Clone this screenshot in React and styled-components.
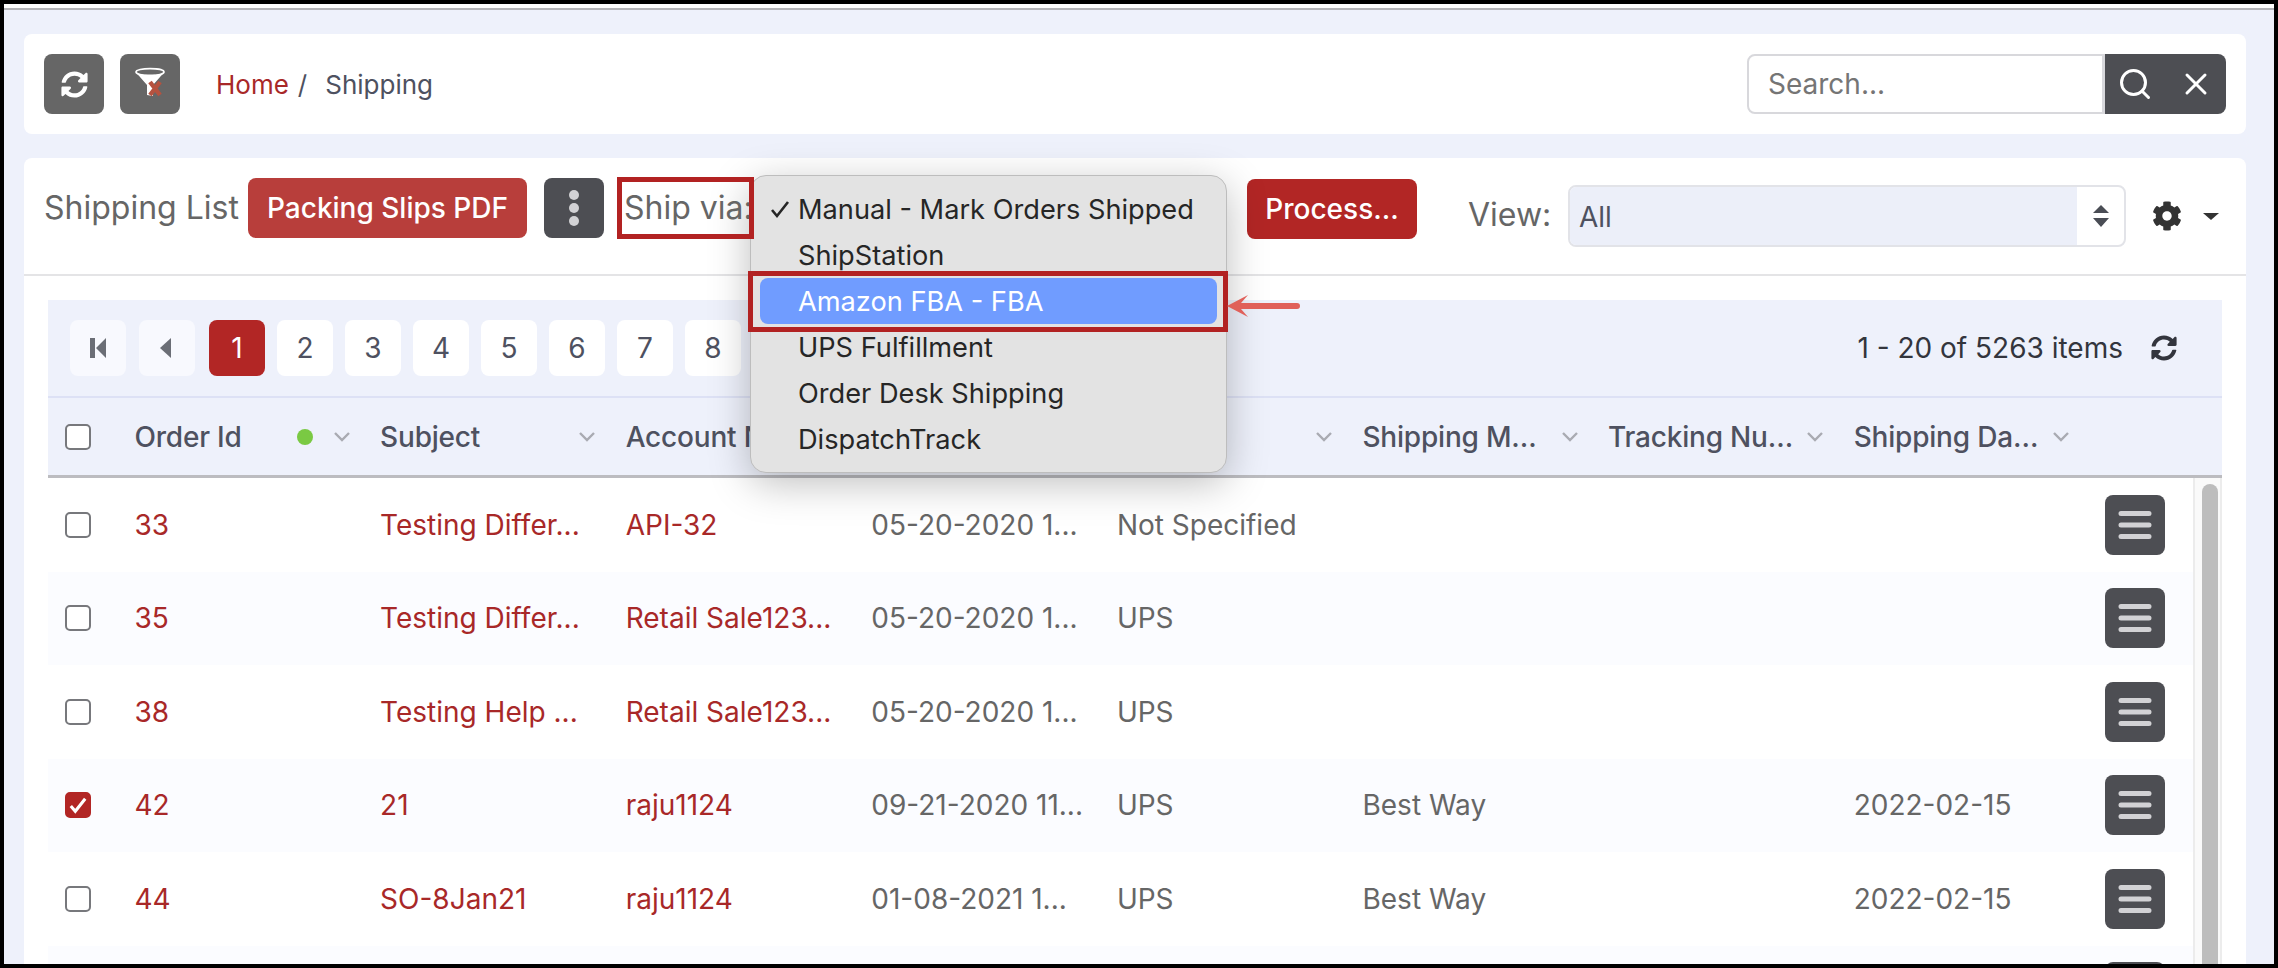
import React from 'react'
import styled, { createGlobalStyle } from 'styled-components'
import { FaSyncAlt, FaCog } from 'react-icons/fa'
import { Search, X } from 'lucide-react'

const GlobalStyle = createGlobalStyle`
  html, body { margin: 0; padding: 0; background: #000; }
  * { box-sizing: border-box; }
  body { font-family: Inter, "Liberation Sans", sans-serif; }
`

const Frame = styled.div`
  position: relative;
  width: 2278px;
  height: 968px;
  border: 4px solid #000;
  background: #eef1fb;
  overflow: hidden;
`
const TopRule = styled.div`
  height: 6px;
  background: #fff;
  border-bottom: 2px solid #b4b4b8;
`
const Page = styled.div`
  padding: 24px 28px 0 20px;
  display: flex;
  flex-direction: column;
  gap: 24px;
`
const Card = styled.section`
  background: #fff;
  border-radius: 8px;
`
const TopBar = styled(Card)`
  height: 100px;
  padding: 20px;
  display: flex;
  align-items: flex-start;
`
const IconButton = styled.button`
  width: 60px;
  height: 60px;
  border: none;
  border-radius: 8px;
  padding: 0;
  flex: none;
  display: flex;
  align-items: center;
  justify-content: center;
  background: ${p => p.$bg || '#666'};
  color: ${p => p.$color || '#fff'};
  margin-left: ${p => p.$ml || 0}px;
`
const Crumbs = styled.nav`
  margin-left: 36px;
  height: 60px;
  display: flex;
  align-items: center;
  font-size: 26px;
  color: #4e5160;
`
const CrumbLink = styled.span`
  color: #a82828;
`
const CrumbSep = styled.span`
  margin: 0 18px 0 9px;
`
const SearchGroup = styled.div`
  margin-left: auto;
  display: flex;
  height: 60px;
`
const SearchInput = styled.input`
  width: 358px;
  height: 60px;
  border: 2px solid #d8d8dc;
  border-right-width: 3px;
  border-radius: 8px 0 0 8px;
  padding: 0 19px;
  font: 400 28px Inter, sans-serif;
  outline: none;
  &::placeholder { color: #757575; opacity: 1; }
`
const SearchActions = styled.div`
  width: 121px;
  background: #4d4e53;
  border-radius: 0 8px 8px 0;
  color: #fff;
  display: flex;
  align-items: center;
  padding-left: 12px;
  gap: 25px;
`
const ListCard = styled(Card)`
  border-radius: 8px 8px 0 0;
`
const Toolbar = styled.div`
  height: 118px;
  padding: 20px 0 0 20px;
  display: flex;
  align-items: flex-start;
  border-bottom: 2px solid #e4e4e6;
`
const ListTitle = styled.h2`
  margin: 0;
  height: 60px;
  line-height: 60px;
  font-size: 32px;
  font-weight: 400;
  color: #666;
  width: 204px;
  flex: none;
  white-space: nowrap;
`
const Button = styled.button`
  height: 60px;
  border: none;
  border-radius: 8px;
  background: ${p => p.$bg};
  color: #fff;
  font: 500 28px Inter, sans-serif;
  padding: 0;
  flex: none;
  width: ${p => p.$w}px;
  margin-left: ${p => p.$ml || 0}px;
  margin-top: ${p => p.$mt || 0}px;
`
const ShipVia = styled.div`
  position: relative;
  z-index: 3;
  margin: -1px 0 0 13px;
  width: 137px;
  height: 62px;
  flex: none;
  border: 5px solid #b22222;
  font-size: 32px;
  line-height: 52px;
  color: #666;
  padding-left: 2px;
  white-space: nowrap;
  overflow: hidden;
`
const ViewLabel = styled.span`
  margin: 7px 0 0 51px;
  width: 100px;
  flex: none;
  height: 60px;
  line-height: 60px;
  font-size: 32px;
  color: #666;
`
const ViewSelect = styled.div`
  margin-top: 7px;
  width: 558px;
  height: 62px;
  flex: none;
  border: 2px solid #e2e3e8;
  border-radius: 8px;
  display: flex;
  overflow: hidden;
`
const ViewValue = styled.div`
  flex: 1;
  background: #eceff9;
  font-size: 28px;
  line-height: 60px;
  padding-left: 9px;
  color: #4e5160;
`
const ViewSpin = styled.div`
  width: 47px;
  display: flex;
  align-items: center;
  justify-content: center;
`
const GearMenu = styled.div`
  margin: 7px 0 0 26px;
  height: 62px;
  display: flex;
  align-items: center;
  color: #333;
  gap: 21px;
`
const Caret = styled.span`
  width: 0;
  height: 0;
  border-left: 8px solid transparent;
  border-right: 8px solid transparent;
  border-top: 7px solid #333;
`
const ListBody = styled.div`
  padding: 24px 24px 0;
`
const PagerBar = styled.div`
  height: 98px;
  background: #eef1fb;
  border-bottom: 2px solid #dde1f5;
  padding: 20px 45px 0 22px;
  display: flex;
  justify-content: space-between;
  align-items: flex-start;
`
const Pages = styled.div`
  display: flex;
  gap: 12px;
`
const PageButton = styled.button`
  width: 56px;
  height: 56px;
  border: none;
  padding: 0;
  border-radius: 8px;
  display: flex;
  align-items: center;
  justify-content: center;
  font: 400 28px Inter, sans-serif;
  background: ${p => (p.$active ? '#b22625' : p.$muted ? '#f8f9fe' : '#fff')};
  color: ${p => (p.$active ? '#fff' : '#4e5160')};
  margin-right: ${p => p.$mr || 0}px;
`
const PagerInfo = styled.div`
  height: 56px;
  display: flex;
  align-items: center;
  font-size: 28px;
  color: #33353d;
  gap: 28px;
`
const gridColumns = '86.5px repeat(8, 245.6px) 1fr'
const HeaderRow = styled.div`
  display: grid;
  grid-template-columns: ${gridColumns};
  align-items: center;
  height: 80px;
  background: #eef1fb;
  border-bottom: 3px solid #bcbcc0;
`
const HeaderCell = styled.div`
  display: flex;
  align-items: center;
  padding-right: 29.5px;
  font-size: 28px;
  font-weight: 500;
  letter-spacing: -0.2px;
  color: #4e5160;
  white-space: nowrap;
`
const Chevron = styled.svg`
  margin-left: ${p => (p.$fixed ? '0' : 'auto')};
  flex: none;
`
const Dot = styled.span`
  width: 16px;
  height: 16px;
  border-radius: 50%;
  background: #7ac943;
  margin-left: auto;
  margin-right: 20px;
  flex: none;
`
const CheckCell = styled.div`
  padding-left: 17px;
  display: flex;
  align-items: center;
`
const CheckBox = styled.span`
  width: 26px;
  height: 26px;
  border-radius: 5px;
  border: 2px solid ${p => (p.$checked ? '#b22625' : '#77787c')};
  background: ${p => (p.$checked ? '#b22625' : '#fff')};
  display: flex;
  align-items: center;
  justify-content: center;
`
const TableScroll = styled.div`
  display: flex;
`
const Rows = styled.div`
  flex: 1;
`
const Row = styled.div`
  display: grid;
  grid-template-columns: ${gridColumns};
  align-items: center;
  height: 93.5px;
  background: ${p => (p.$alt ? '#fbfcff' : '#fff')};
`
const Cell = styled.div`
  font-size: 28px;
  white-space: nowrap;
  color: ${p => (p.$link ? '#a82828' : '#666')};
`
const ActionCell = styled.div`
  padding-left: 5.5px;
`
const Scrollbar = styled.div`
  width: 29px;
  flex: none;
  padding: 6px 5px 0 7px;
  border-left: 2px solid #ececec;
  border-right: 2px solid #ececec;
  background: #fafafa;
`
const Thumb = styled.div`
  width: 16px;
  height: 900px;
  border-radius: 8px;
  background: #bdbdbd;
`
const Dropdown = styled.div`
  position: absolute;
  z-index: 2;
  left: 746px;
  top: 171px;
  width: 477px;
  height: 298px;
  padding: 10px 9px;
  background: #e3e3e3;
  border: 1px solid #bdbdbd;
  border-radius: 16px;
  box-shadow: 0 10px 40px rgba(0, 0, 0, 0.26);
  display: flex;
  flex-direction: column;
`
const MenuItem = styled.div`
  height: 46px;
  flex: none;
  display: flex;
  align-items: center;
  border-radius: 8px;
  padding-left: 10px;
  font-size: 27.2px;
  color: ${p => (p.$active ? '#fff' : '#262626')};
  background: ${p => (p.$active ? '#709cff' : 'transparent')};
  white-space: nowrap;
`
const CheckSlot = styled.span`
  width: 28px;
  flex: none;
  display: flex;
`
const MenuMark = styled.div`
  position: absolute;
  left: -3px;
  top: 95px;
  width: 480px;
  height: 61px;
  border: 5px solid #b22222;
`
const Arrow = styled.svg`
  position: absolute;
  z-index: 3;
  left: 1222px;
  top: 288px;
`

const ChevronDown = ({ fixed }) => (
  <Chevron $fixed={fixed} width="18" height="12" viewBox="0 0 18 12">
    <path d="M2 2l7 7 7-7" fill="none" stroke="#a9abb2" strokeWidth="2.4" />
  </Chevron>
)

const FilterClear = () => (
  <svg width="40" height="40" viewBox="0 0 40 40">
    <ellipse cx="20" cy="8" rx="14" ry="3.4" fill="none" stroke="#fff" strokeWidth="1.6" />
    <path d="M6.500 9c4 2.600 23 2.600 27 0L23 21v11l-6-1V21z" fill="#fff" />
    <path d="M20 18l10 13m0-13L20 31" stroke="#b5523f" strokeWidth="4.400" fill="none" />
  </svg>
)

const Kebab = () => (
  <svg width="12" height="40" viewBox="0 0 12 40">
    <circle cx="6" cy="7" r="5" fill="#d2d2d5" />
    <circle cx="6" cy="20" r="5" fill="#d2d2d5" />
    <circle cx="6" cy="33" r="5" fill="#d2d2d5" />
  </svg>
)

const Bars = () => (
  <svg width="34" height="32" viewBox="0 0 34 32">
    <path d="M3 4.500h28M3 16h28M3 27.500h28" stroke="#d2d2d5" strokeWidth="5" strokeLinecap="round" />
  </svg>
)

const Tick = ({ size, color, width }) => (
  <svg width={size} height={size} viewBox="0 0 20 20">
    <path d="M2 11l5 6L18 3" fill="none" stroke={color} strokeWidth={width} />
  </svg>
)

const rows = [
  { id: '33', subject: 'Testing Differ...', account: 'API-32', date: '05-20-2020 1...', carrier: 'Not Specified' },
  { id: '35', subject: 'Testing Differ...', account: 'Retail Sale123...', date: '05-20-2020 1...', carrier: 'UPS' },
  { id: '38', subject: 'Testing Help ...', account: 'Retail Sale123...', date: '05-20-2020 1...', carrier: 'UPS' },
  { id: '42', subject: '21', account: 'raju1124', date: '09-21-2020 11...', carrier: 'UPS', method: 'Best Way', shipped: '2022-02-15', checked: true },
  { id: '44', subject: 'SO-8Jan21', account: 'raju1124', date: '01-08-2021 1...', carrier: 'UPS', method: 'Best Way', shipped: '2022-02-15' },
  { id: 'next' },
]

const columns = ['Subject', 'Account N…', 'Order Date', 'Carrier', 'Shipping M…', 'Tracking Nu…', 'Shipping Da…']

const shippers = ['Manual - Mark Orders Shipped', 'ShipStation', 'Amazon FBA - FBA', 'UPS Fulfillment', 'Order Desk Shipping', 'DispatchTrack']

export default function App() {
  return (
    <Frame>
      <GlobalStyle />
      <TopRule />
      <Page>
        <TopBar>
          <IconButton><FaSyncAlt size={27} /></IconButton>
          <IconButton $ml={16}><FilterClear /></IconButton>
          <Crumbs>
            <CrumbLink>Home</CrumbLink>
            <CrumbSep>/</CrumbSep>
            Shipping
          </Crumbs>
          <SearchGroup>
            <SearchInput placeholder="Search..." />
            <SearchActions>
              <Search size={36} strokeWidth={2} />
              <X size={36} strokeWidth={2} />
            </SearchActions>
          </SearchGroup>
        </TopBar>
        <ListCard>
          <Toolbar>
            <ListTitle>Shipping List</ListTitle>
            <Button $bg="#b83e3b" $w={279}>Packing Slips PDF</Button>
            <IconButton $bg="#4d4e53" $ml={17}><Kebab /></IconButton>
            <ShipVia>Ship via:</ShipVia>
            <Button $bg="#b22625" $w={170} $ml={493} $mt={1}>Process...</Button>
            <ViewLabel>View:</ViewLabel>
            <ViewSelect>
              <ViewValue>All</ViewValue>
              <ViewSpin>
                <svg width="16" height="24" viewBox="0 0 16 24">
                  <path d="M8 1l8 8H0zM0 14h16l-8 9z" fill="#4a4d55" />
                </svg>
              </ViewSpin>
            </ViewSelect>
            <GearMenu>
              <FaCog size={30} />
              <Caret />
            </GearMenu>
          </Toolbar>
          <ListBody>
            <PagerBar>
              <Pages>
                <PageButton $muted $mr={1}>
                  <svg width="18" height="22" viewBox="0 0 18 22"><path d="M1 1h5v20H1zM7 11l10-10v20z" fill="#6b6e76" /></svg>
                </PageButton>
                <PageButton $muted $mr={2}>
                  <svg width="14" height="22" viewBox="0 0 14 22"><path d="M11 1v20L0 11z" fill="#6b6e76" /></svg>
                </PageButton>
                <PageButton $active>1</PageButton>
                {[2, 3, 4, 5, 6, 7, 8].map(n => <PageButton key={n}>{n}</PageButton>)}
              </Pages>
              <PagerInfo>
                1 - 20 of 5263 items
                <FaSyncAlt size={26} />
              </PagerInfo>
            </PagerBar>
            <HeaderRow>
              <CheckCell><CheckBox /></CheckCell>
              <HeaderCell>Order Id<Dot /><ChevronDown fixed /></HeaderCell>
              {columns.map(c => <HeaderCell key={c}>{c}<ChevronDown /></HeaderCell>)}
            </HeaderRow>
            <TableScroll>
              <Rows>
                {rows.map((r, i) => (
                  <Row key={r.id} $alt={i % 2 === 1}>
                    <CheckCell>
                      <CheckBox $checked={r.checked}>
                        {r.checked && <Tick size={18} color="#fff" width={3.4} />}
                      </CheckBox>
                    </CheckCell>
                    <Cell $link>{r.subject && r.id}</Cell>
                    <Cell $link>{r.subject}</Cell>
                    <Cell $link>{r.account}</Cell>
                    <Cell>{r.date}</Cell>
                    <Cell>{r.carrier}</Cell>
                    <Cell>{r.method}</Cell>
                    <Cell />
                    <Cell>{r.shipped}</Cell>
                    <ActionCell><IconButton $bg="#4d4e53"><Bars /></IconButton></ActionCell>
                  </Row>
                ))}
              </Rows>
              <Scrollbar><Thumb /></Scrollbar>
            </TableScroll>
          </ListBody>
        </ListCard>
      </Page>
      <Dropdown>
        {shippers.map((s, i) => (
          <MenuItem key={s} $active={i === 2}>
            <CheckSlot>{i === 0 && <Tick size={20} color="#262626" width={2.6} />}</CheckSlot>
            {s}
          </MenuItem>
        ))}
        <MenuMark />
      </Dropdown>
      <Arrow width="76" height="28" viewBox="0 0 76 28">
        <path d="M1 14L22 3l-7 8h56a3 3 0 010 6H15l7 8z" fill="#e0605a" />
      </Arrow>
    </Frame>
  )
}
